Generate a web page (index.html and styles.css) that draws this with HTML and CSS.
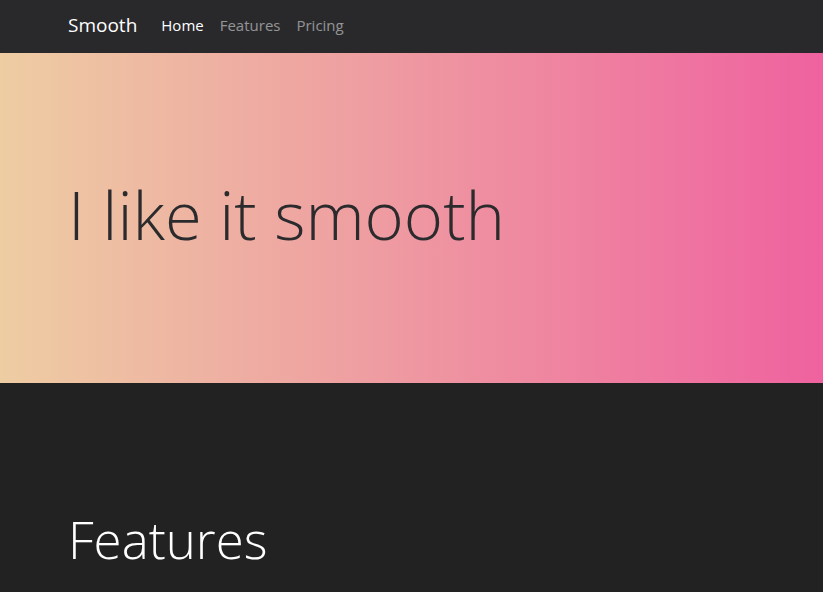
FILE: index.html
```html
<!DOCTYPE html>
<html lang="en">
<head>
<meta charset="utf-8">
<title>Smooth</title>
<link rel="stylesheet" href="styles.css">
</head>
<body>
<nav class="navbar">
  <div class="container nav-inner">
    <a class="brand" href="#">Smooth</a>
    <ul class="nav-links">
      <li><a class="nav-link active" href="#">Home</a></li>
      <li><a class="nav-link" href="#">Features</a></li>
      <li><a class="nav-link" href="#">Pricing</a></li>
    </ul>
  </div>
</nav>
<header class="hero">
  <div class="container">
    <h1 class="hero-title">I like it smooth</h1>
  </div>
</header>
<section class="features">
  <div class="container">
    <h2 class="section-title">Features</h2>
  </div>
</section>
</body>
</html>
```
FILE: styles.css
```css
* { box-sizing: border-box; }
html, body { margin: 0; padding: 0; }
body {
  background: #222222;
  font-family: "Open Sans", "Noto Sans", sans-serif;
  color: #fff;
  overflow: hidden;
}
.container {
  padding: 0 0 0 68px;
}
.navbar {
  background: #29292c;
  height: 53px;
}
.nav-inner {
  display: flex;
  align-items: center;
  height: 100%;
  padding-bottom: 4px;
}
.brand {
  color: #fff;
  text-decoration: none;
  font-size: 19px;
  margin-right: 16px;
}
.nav-links {
  list-style: none;
  margin: 0;
  padding: 0;
  display: flex;
}
.nav-link {
  display: block;
  padding: 0 8px;
  color: rgba(255,255,255,0.5);
  text-decoration: none;
  font-size: 15px;
}
.nav-link.active { color: #fff; }
.hero {
  height: 330px;
  background: linear-gradient(to right, #eecda3, #ef629f);
  display: flex;
  align-items: center;
}
.hero .container { width: 100%; }
.hero-title {
  margin: 0;
  font-weight: 300;
  font-size: 67px;
  color: #2b2b2d;
  line-height: 1.2;
  padding-bottom: 8px;
}
.features .container {
  padding-top: 126px;
}
.section-title {
  margin: 0;
  font-weight: 300;
  font-size: 51px;
  line-height: 1.2;
}
```
